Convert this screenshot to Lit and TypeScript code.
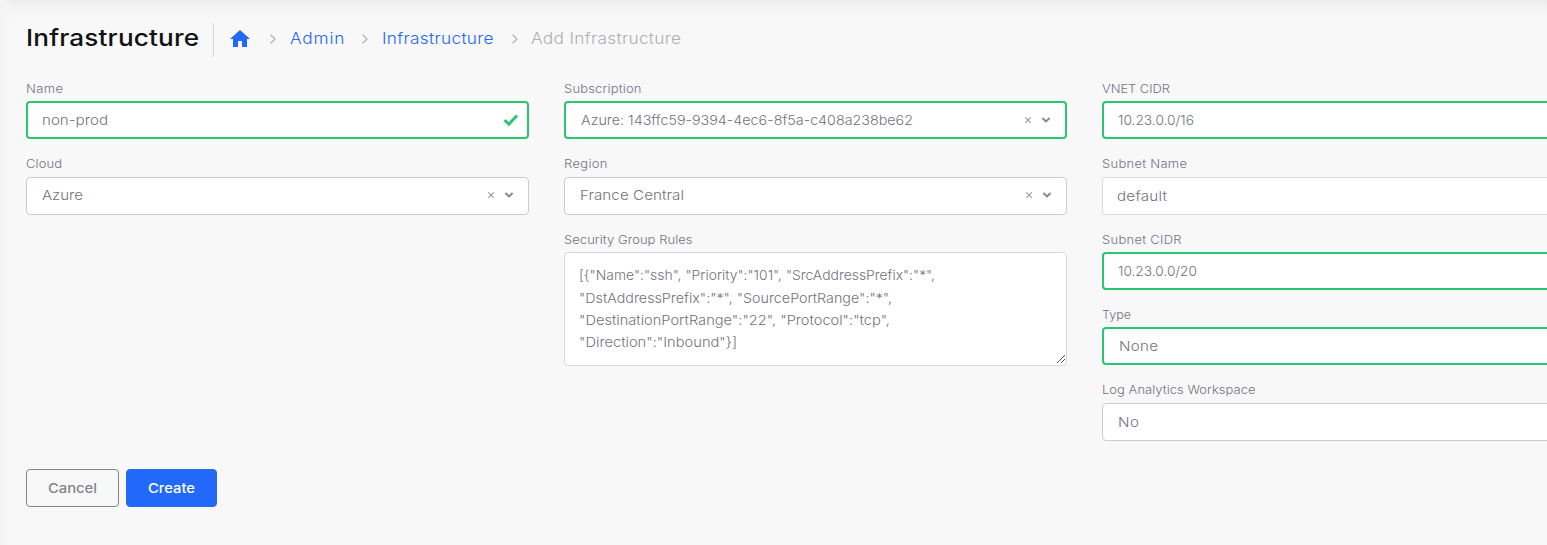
import { LitElement, html, css, nothing } from "lit";
import { customElement, property } from "lit/decorators.js";

/** Single line of text, widened and tracked out to a given advance width. */
@customElement("tracked-text")
class TrackedText extends LitElement {
  @property() text = "";
  @property({ type: Number }) width = 0;

  static styles = css`
    :host { display: inline-block; white-space: pre; }
    .t { display: inline-block; transform-origin: 0 50%; }
  `;

  updated() {
    const span = this.renderRoot.querySelector(".t") as HTMLElement;
    const natural = span.offsetWidth ? span.getBoundingClientRect().width : this.width;
    const scale = Math.min(1.12, Math.max(1, this.width / natural));
    const gaps = Math.max(1, this.text.length - 1);
    const spacing = (this.width / scale - natural) / gaps;
    span.style.letterSpacing = `${spacing}px`;
    span.style.transform = `scaleX(${scale})`;
    span.style.marginRight = `${this.width - this.width / scale - spacing}px`;
  }

  render() {
    return html`<span class="t">${this.text}</span>`;
  }
}

const t = (text: string, width: number) =>
  html`<tracked-text .text=${text} .width=${width}></tracked-text>`;

const chevronRight = html`<svg class="sep" width="8" height="12" viewBox="0 0 8 12">
  <path d="M1.6 1.8 6 6 1.6 10.2" fill="none" stroke="#b4b4b8" stroke-width="1.3" /></svg>`;

const homeIcon = html`<svg class="home" width="20" height="17" viewBox="0 0 20 17">
  <path d="M10 0 0 9h3v8h5v-6h4v6h5V9h3z" fill="#2269f9" /></svg>`;

const checkIcon = html`<svg class="check" width="16" height="14" viewBox="0 0 16 14">
  <path d="M1.6 7 5.9 11.2 14 2.6" fill="none" stroke="#28c76f" stroke-width="2.9" /></svg>`;

const selectIcons = html`<svg class="select-icons" width="28" height="10" viewBox="0 0 28 10">
  <path d="M1.4 2.4 6.8 7.8M6.8 2.4 1.4 7.8" fill="none" stroke="#999" stroke-width="1.15" />
  <path d="M18.4 3 22 6.4 25.6 3" fill="none" stroke="#858585" stroke-width="1.9" /></svg>`;

@customElement("form-field")
class FormField extends LitElement {
  @property() label = "";
  @property({ type: Number }) labelWidth = 0;
  @property() value = "";
  @property({ type: Number }) valueWidth = 0;
  @property() kind = "input";
  @property() icon = "";
  @property({ type: Number }) inset = 15;
  @property({ type: Boolean }) valid = false;

  static styles = css`
    :host { display: flow-root; height: 75.35px; }
    .label { height: 21.3px; margin-top: -0.3px; line-height: 18px; font-size: 11.6px; color: #757384; }
    .box {
      box-sizing: border-box; height: 38px; display: flex; align-items: center;
      justify-content: space-between; background: #fff; border: 1px solid #d8d6de;
      border-radius: 4px; font-size: 13.5px; line-height: 20px; color: #747280;
    }
    .box.select { border-color: #ccc; }
    .box.clearable { padding-bottom: 1px; }
    .box.valid { border: 2px solid #28c76f; padding-bottom: 0; }
    .check { margin-right: 8px; }
    .select-icons { margin-right: 13px; }
  `;

  render() {
    return html`
      <div class="label">${t(this.label, this.labelWidth)}</div>
      <div class="box ${this.kind} ${this.valid ? "valid" : ""} ${this.icon === "select" ? "clearable" : ""}" style="padding-left:${this.inset}px">
        ${t(this.value, this.valueWidth)}
        ${this.icon === "check" ? checkIcon : this.icon === "select" ? selectIcons : nothing}
      </div>`;
  }
}

interface Field {
  label: string; lw: number; value: string; vw: number;
  kind?: string; icon?: string; inset?: number; valid?: boolean;
}

const columnA: Field[] = [
  { label: "Name", lw: 37, value: "non-prod", vw: 66, icon: "check", inset: 14, valid: true },
  { label: "Cloud", lw: 36, value: "Azure", vw: 41, kind: "select", icon: "select", inset: 15 },
];
const columnB: Field[] = [
  { label: "Subscription", lw: 77.5, value: "Azure: 143ffc59-9394-4ec6-8f5a-c408a238be62", vw: 332, kind: "select", icon: "select", inset: 15, valid: true },
  { label: "Region", lw: 43.5, value: "France Central", vw: 104, kind: "select", icon: "select", inset: 15 },
];
const columnC: Field[] = [
  { label: "VNET CIDR", lw: 68, value: "10.23.0.0/16", vw: 76, inset: 14, valid: true },
  { label: "Subnet Name", lw: 85, value: "default", vw: 50, inset: 14 },
  { label: "Subnet CIDR", lw: 79.5, value: "10.23.0.0/20", vw: 79, inset: 14, valid: true },
  { label: "Type", lw: 29, value: "None", vw: 39, kind: "select", inset: 15, valid: true },
  { label: "Log Analytics Workspace", lw: 153.5, value: "No", vw: 21, kind: "select", inset: 15 },
];
const rules: [string, number][] = [
  ['[{"Name":"ssh", "Priority":"101", "SrcAddressPrefix":"*",', 356],
  ['"DstAddressPrefix":"*", "SourcePortRange":"*",', 313],
  ['"DestinationPortRange":"22", "Protocol":"tcp",', 311],
  ['"Direction":"Inbound"}]', 158],
];

@customElement("app-root")
class AppRoot extends LitElement {
  static styles = css`
    :host {
      display: block; box-sizing: border-box; width: 100%; height: 545px; overflow: hidden;
      font-family: Inter, "Open Sans", sans-serif; font-weight: 350;
      background:
        linear-gradient(90deg, #f4f4f4, rgba(248, 248, 248, 0) 13px),
        linear-gradient(180deg, #ebeeed, #f2f3f3 7px, #f6f6f6 14px, #f8f8f8 23px);
      background-color: #f8f8f8;
    }
    .page { box-sizing: border-box; height: 545px; padding: 22px 0 0 26px; }
    .head { display: flex; height: 35px; align-items: center; }
    .title { font-size: 23.3px; font-weight: 450; line-height: 32px; padding-bottom: 3px; color: #121212; width: 187px; }
    .rule { width: 1px; height: 34px; background: #d6d6da; margin-right: 16px; }
    .home { display: block; margin: 0 19px 2px 0; }
    .crumbs { display: flex; align-items: center; font-size: 15.4px; line-height: 24px; color: #2269f9; }
    .crumb { display: flex; padding-bottom: 2px; }
    .crumb.last { color: #aeaeb5; }
    .sep { display: block; margin: 0 12.5px 1px 0; }
    .crumb + .sep { margin-left: 17.5px; }
    .form { display: grid; grid-template-columns: 503px 503px 503px; column-gap: 35px; height: 389px; padding-top: 23.3px; box-sizing: content-box; }
    .area-label { height: 21.3px; margin-top: -0.3px; line-height: 18px; font-size: 11.6px; color: #757384; }
    .area {
      box-sizing: border-box; height: 114px; padding: 11.5px 14px; border: 1px solid #d8d6de; border-radius: 4px;
      background: #fff; font-size: 13.5px; line-height: 22.3px; color: #747280;
      display: flex; justify-content: space-between;
    }
    .line { height: 22.3px; }
    .grip { align-self: flex-end; margin: 0 -14px -11px 0; }
    .actions { display: flex; gap: 7px; font-size: 13.5px; font-weight: 450; }
    .btn {
      box-sizing: border-box; height: 38px; border-radius: 4px; border: 1px solid #82868b; color: #82868b;
      display: flex; align-items: center; justify-content: center; width: 93px;
    }
    .btn.primary { width: 91px; background: #2269f9; border-color: #2269f9; color: #fff; font-weight: 550; }
  `;

  private field(f: Field) {
    return html`<form-field .label=${f.label} .labelWidth=${f.lw} .value=${f.value} .valueWidth=${f.vw}
      .kind=${f.kind ?? "input"} .icon=${f.icon ?? ""} .inset=${f.inset ?? 15} .valid=${!!f.valid}></form-field>`;
  }

  render() {
    return html`
      <div class="page">
        <div class="head">
          <div class="title">${t("Infrastructure", 173)}</div>
          <div class="rule"></div>
          <nav class="crumbs">
            ${homeIcon}${chevronRight}
            <span class="crumb">${t("Admin", 54.5)}</span>${chevronRight}
            <span class="crumb">${t("Infrastructure", 111.5)}</span>${chevronRight}
            <span class="crumb last">${t("Add Infrastructure", 150)}</span>
          </nav>
        </div>
        <div class="form">
          <div>${columnA.map((f) => this.field(f))}</div>
          <div>
            ${columnB.map((f) => this.field(f))}
            <div class="area-label">${t("Security Group Rules", 128.5)}</div>
            <div class="area">
              <div>${rules.map(([text, w]) => html`<div class="line">${t(text, w)}</div>`)}</div>
              <svg class="grip" width="10" height="10" viewBox="0 0 10 10">
                <path d="M1 9 9 1M5 9 9 5" stroke="#555" stroke-width="1" fill="none" />
              </svg>
            </div>
          </div>
          <div>${columnC.map((f) => this.field(f))}</div>
        </div>
        <div class="actions">
          <div class="btn">${t("Cancel", 49)}</div>
          <div class="btn primary">${t("Create", 47)}</div>
        </div>
      </div>`;
  }
}
